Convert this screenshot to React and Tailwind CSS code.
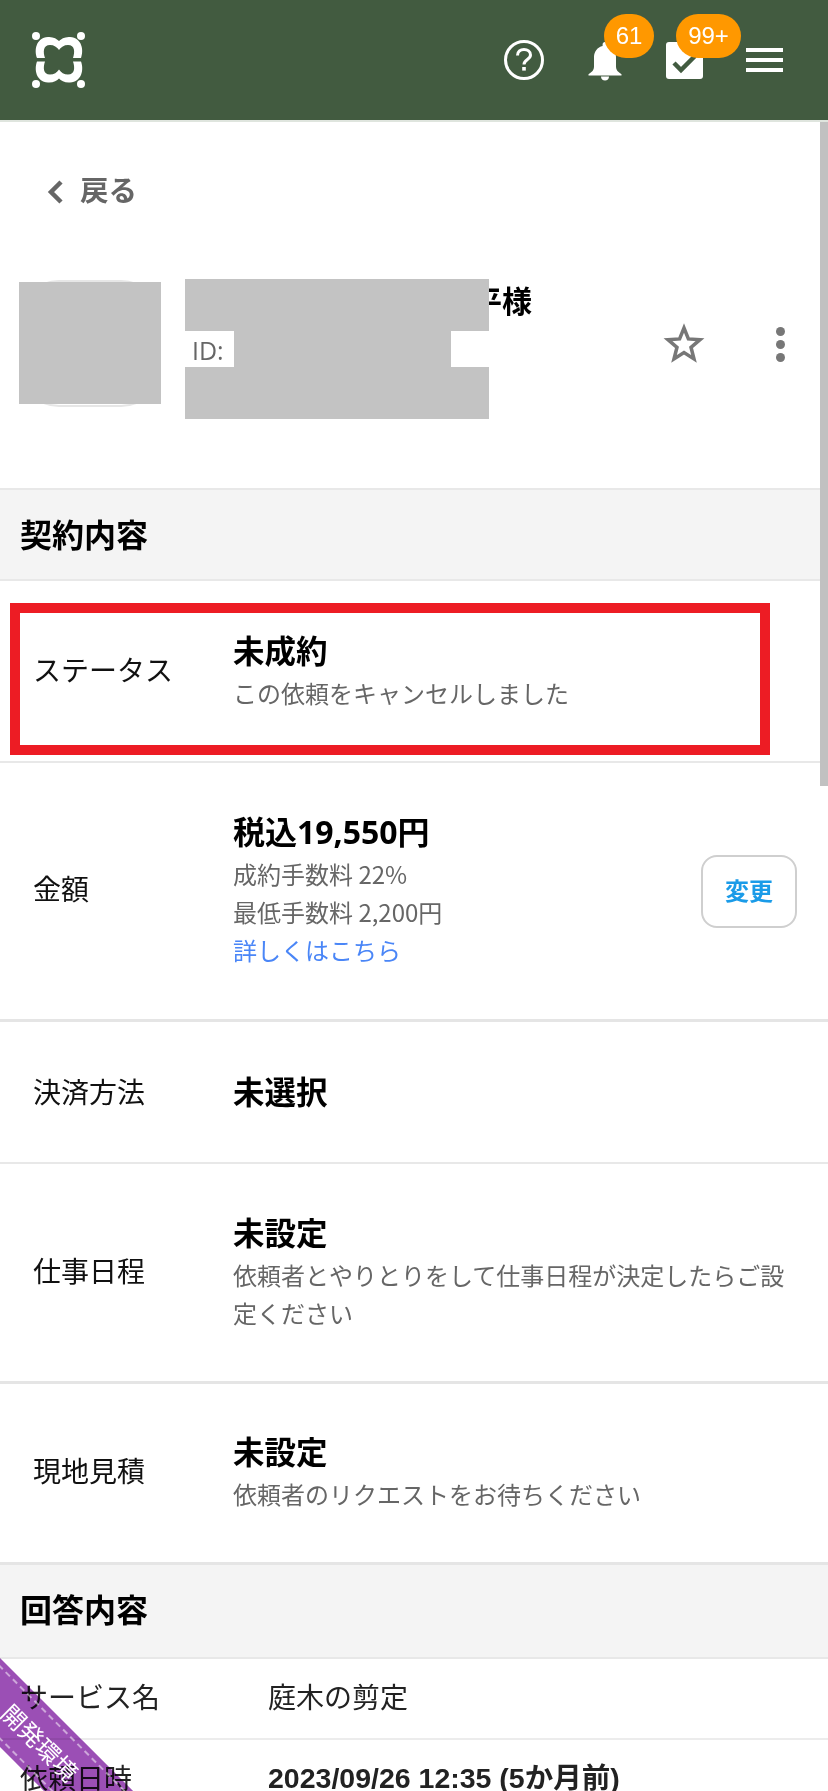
const jp = "[font-family:'Open_Sans','Noto_Sans_CJK_JP',sans-serif]";

const logoHalf = "M8 28C5 20 7 8 19 7C24 6.5 28 9 30 11C32 9 36 6.5 41 7C53 8 55 20 52 28L44 28C46 22 46 15 39 15C35 15 32 17 30 20C28 17 25 15 21 15C14 15 14 22 16 28Z";

function Logo() {
  return (
    <svg width="60" height="60" viewBox="0 0 60 60" className="absolute left-[29px] top-[30px]" fill="#fff">
      <circle cx="7" cy="6" r="4" />
      <circle cx="52" cy="6" r="4" />
      <circle cx="7" cy="54" r="4" />
      <circle cx="52" cy="54" r="4" />
      <path d={logoHalf} />
      <path d={logoHalf} transform="translate(0 59.5) scale(1 -1)" />
    </svg>
  );
}

function Badge({ children, className }) {
  return (
    <span className={"absolute top-[14px] h-[44px] rounded-full bg-[#ff9800] flex items-center justify-center text-white text-[24px] [font-family:'Liberation_Sans',sans-serif] " + className}>
      {children}
    </span>
  );
}

function Header() {
  return (
    <header className="relative h-[122px] shrink-0 bg-[#425b40] border-b-2 border-[#dfe5de] box-border">
      <Logo />
      <svg width="42" height="42" viewBox="0 0 42 42" className="absolute left-[503px] top-[39px]" fill="none">
        <circle cx="21" cy="21" r="18.5" stroke="#fff" strokeWidth="3" />
        <path d="M14.5 16.5C14.5 12.5 17.5 10.5 21 10.5C24.5 10.5 27.5 12.5 27.5 16C27.5 20.5 21 20.5 21 25.5" stroke="#fff" strokeWidth="3" />
        <rect x="19.2" y="28" width="3.6" height="3.6" fill="#fff" />
      </svg>
      <svg width="34" height="40" viewBox="0 0 34 40" className="absolute left-[588px] top-[41px]">
        <path d="M17 1C15.5 1 14.6 2 14.6 3.6V5C9.5 6.2 6 10.6 6 16V26C6 29 4 31 .5 33.2V34.5H33.5V33.2C30 31 28 29 28 26V16C28 10.6 24.5 6.2 19.4 5V3.6C19.4 2 18.5 1 17 1Z" fill="#fff" />
        <path d="M13 35.5H21C21 38 19.3 39.5 17 39.5C14.7 39.5 13 38 13 35.5Z" fill="#fff" />
      </svg>
      <svg width="38" height="38" viewBox="0 0 38 38" className="absolute left-[666px] top-[42px]">
        <rect x="0" y="0" width="37" height="37" rx="3" fill="#fff" />
        <path d="M8 21L15 28L29 14" stroke="#425b40" strokeWidth="4.5" fill="none" />
      </svg>
      <div className="absolute left-[746px] top-[48px] w-[37px] flex flex-col gap-[6px]">
        <span className="h-[4px] bg-white" />
        <span className="h-[4px] bg-white" />
        <span className="h-[4px] bg-white" />
      </div>
      <Badge className="left-[604px] w-[50px]">61</Badge>
      <Badge className="left-[676px] w-[65px]">99+</Badge>
    </header>
  );
}

function SectionHead({ children, h, extra = "" }) {
  return (
    <div className={"shrink-0 flex items-center pl-[20px] bg-[#f4f4f4] box-border border-b-2 border-[#e8e8e8] text-[32px] font-bold text-black " + h + " " + extra}>
      {children}
    </div>
  );
}

function Row({ label, h, border, children, right }) {
  return (
    <div className={"shrink-0 box-border flex items-center " + h + " " + border}>
      <div className="w-[233px] pl-[33px] text-[28px] text-[#111] shrink-0">{label}</div>
      <div className="flex-1 min-w-0">{children}</div>
      {right}
    </div>
  );
}

const Bold = ({ children, size = "text-[31.5px]" }) => <div className={"h-[46px] leading-[46px] font-bold text-black " + size}>{children}</div>;
const Sub = ({ children, color = "text-[#666]" }) => <div className={"leading-[38px] text-[24px] [font-family:'Noto_Sans_CJK_JP',sans-serif] " + color}>{children}</div>;

export default function App() {
  return (
    <div className={"relative w-[828px] h-[1791px] overflow-hidden bg-white flex flex-col " + jp}>
      <Header />

      <div className="shrink-0 h-[139px] pl-[47px] pt-[48px] flex items-start gap-[16px] box-border text-[#666]">
        <svg width="17" height="24" viewBox="0 0 17 24" fill="none" className="mt-[10px]">
          <path d="M14 2L4 12L14 22" stroke="#666" strokeWidth="4.5" />
        </svg>
        <span className="text-[28.5px] font-bold leading-[40px]">戻る</span>
      </div>

      <div className="relative shrink-0 h-[227px] box-border">
        <div className="absolute left-[19px] top-[19px] w-[142px] h-[127px] rounded-[40px] border-2 border-[#e6e6e6] bg-white" />
        <div className="pl-[185px] pt-[17px]">
          <div className="pl-[287px] h-[46px] leading-[46px] text-[30px] font-bold text-black">平様</div>
          <div className="mt-[8px] pl-[7px] h-[36px] leading-[36px] text-[25px] text-[#666]">ID:</div>
        </div>
        <svg width="42" height="40" viewBox="0 0 42 40" className="absolute left-[663px] top-[62px]" fill="none">
          <path d="M21 5L25.4 15.9L37 16.7L28 24.3L31 36L21 29.6L11 36L14 24.3L5 16.7L16.6 15.9Z" stroke="#777" strokeWidth="3.5" />
        </svg>
        <div className="absolute left-[776px] top-[66px] flex flex-col gap-[4px]">
          <span className="w-[9px] h-[9px] rounded-full bg-[#777]" />
          <span className="w-[9px] h-[9px] rounded-full bg-[#777]" />
          <span className="w-[9px] h-[9px] rounded-full bg-[#777]" />
        </div>
      </div>

      <SectionHead h="h-[93px]" extra="border-t-2">契約内容</SectionHead>

      <Row label="ステータス" h="h-[182px]" border="border-b-2 border-[#e8e8e8] pb-[2px]">
        <Bold>未成約</Bold>
        <Sub>この依頼をキャンセルしました</Sub>
      </Row>

      <Row
        label="金額"
        h="h-[259px]"
        border="border-b-[3px] border-[#e5e5e5] pb-[4px]"
        right={
          <button className="mr-[31px] mt-[4px] w-[96px] h-[73px] rounded-[16px] border-2 border-[#cfcfcf] bg-white text-[24px] font-bold text-[#1a9be8]">変更</button>
        }
      >
        <Bold size="text-[32px]">税込19,550円</Bold>
        <Sub>成約手数料 22%</Sub>
        <Sub>最低手数料 2,200円</Sub>
        <Sub color="text-[#4a86f7]">詳しくはこちら</Sub>
      </Row>

      <Row label="決済方法" h="h-[142px]" border="border-b-2 border-[#e8e8e8] pb-[1px]">
        <Bold>未選択</Bold>
      </Row>

      <Row label="仕事日程" h="h-[220px]" border="border-b-[3px] border-[#e5e5e5] pb-[4px]">
        <div className="pr-[36px]">
          <Bold>未設定</Bold>
          <Sub>依頼者とやりとりをして仕事日程が決定したらご設定ください</Sub>
        </div>
      </Row>

      <Row label="現地見積" h="h-[181px]" border="border-b-[3px] border-[#e5e5e5] pb-[4px]">
        <Bold>未設定</Bold>
        <Sub>依頼者のリクエストをお待ちください</Sub>
      </Row>

      <SectionHead h="h-[94px]" extra="pb-[3px]">回答内容</SectionHead>

      <div className="shrink-0 h-[81px] box-border flex items-center border-b-2 border-[#ececec] pb-[3px] text-[#222] text-[28px]">
        <div className="w-[268px] pl-[20px] shrink-0">サービス名</div>
        <div>庭木の剪定</div>
      </div>
      <div className="shrink-0 h-[76px] flex items-center text-[#222] text-[28px]">
        <div className="w-[268px] pl-[20px] shrink-0">依頼日時</div>
        <div className="font-bold text-[28.5px] [font-family:'Liberation_Sans','Noto_Sans_CJK_JP',sans-serif]">2023/09/26 12:35 (5か月前)</div>
      </div>

      {/* redaction blocks */}
      <div className="absolute left-[19px] top-[282px] w-[142px] h-[122px] bg-[#c3c3c3]" />
      <div className="absolute left-[185px] top-[279px] w-[304px] h-[52px] bg-[#c3c3c3]" />
      <div className="absolute left-[234px] top-[331px] w-[217px] h-[36px] bg-[#c3c3c3]" />
      <div className="absolute left-[185px] top-[367px] w-[304px] h-[52px] bg-[#c3c3c3]" />

      {/* red annotation */}
      <div className="absolute left-[10px] top-[603px] w-[760px] h-[152px] border-[10px] border-[#ed1c24] box-border" />

      {/* scrollbar */}
      <div className="absolute right-0 top-[122px] w-[8px] h-[664px] bg-[#c1c1c1]" />

      {/* ribbon: the band tints the text under it, its label sits on top */}
      <div className="absolute left-[-110px] top-[1711px] w-[300px] h-[63px] rotate-45 bg-[#9b4fb5] mix-blend-multiply" />
      <div className="absolute left-[-110px] top-[1711px] w-[300px] h-[63px] rotate-45 flex items-center justify-center p-[5px] box-border">
        <div className="w-full h-full border-y-2 border-dashed border-white/50 flex items-center justify-center text-white text-[24px] leading-none">開発環境</div>
      </div>
    </div>
  );
}
